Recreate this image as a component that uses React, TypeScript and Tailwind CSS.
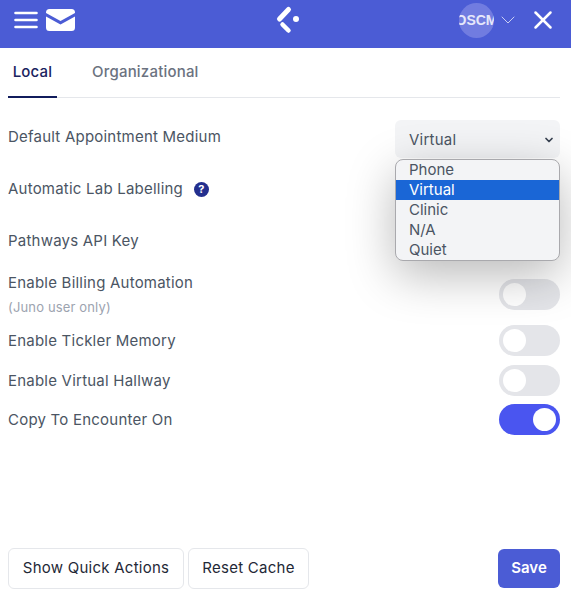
import { ChevronDown, X } from "lucide-react";

const inter = "font-['Inter',sans-serif]";

function Toggle({ on = false }: { on?: boolean }) {
  return (
    <span
      className={`flex h-[31px] w-[61px] shrink-0 items-center rounded-full px-[4px] ${
        on ? "justify-end bg-[#4a55f0]" : "justify-start bg-[#e4e5e9]"
      }`}
    >
      <span className="h-[23px] w-[23px] rounded-full bg-white" />
    </span>
  );
}

function Row({ label, on, className }: { label: string; on?: boolean; className: string }) {
  return (
    <div className={`flex items-center justify-between ${className}`}>
      <span className="pt-[2px]">{label}</span>
      <Toggle on={on} />
    </div>
  );
}

export default function App() {
  const options = ["Phone", "Virtual", "Clinic", "N/A", "Quiet"];

  return (
    <div className={`flex h-[591px] w-[571px] flex-col overflow-hidden bg-white text-[15px] text-[#4b5563] ${inter}`}>
      {/* Header */}
      <header className="flex h-12 shrink-0 items-center justify-between bg-[#4b5cd5] pb-[8px] pl-[14px] pr-[13px]">
        <div className="flex items-center gap-[8px]">
          <svg width="24" height="20" viewBox="0 0 24 20" fill="none" stroke="white" strokeWidth="2.6" strokeLinecap="round">
            <path d="M1.5 3h21M1.5 10h21M1.5 17h21" />
          </svg>
          <svg width="29" height="22" viewBox="0 0 29 22" fill="white">
            <path d="M3.5 0h22A3.5 3.5 0 0 1 29 3.5v.6l-14.5 8L0 4.100v-.6A3.500 3.500 0 0 1 3.500 0Z" />
            <path d="M0 7.500l14.500 8 14.500-8v11A3.500 3.500 0 0 1 25.500 22h-22A3.500 3.500 0 0 1 0 18.500Z" />
          </svg>
        </div>

        {/* Logo */}
        <svg className="ml-[41px]" width="26" height="30" viewBox="0 0 26 30" fill="white" stroke="white" strokeLinecap="round">
          <path d="M4.500 14 13.500 4.500" fill="none" strokeWidth="5" />
          <path d="M7.500 19.500 13.500 25.500" fill="none" strokeWidth="4.500" />
          <circle cx="21" cy="14" r="3" stroke="none" />
        </svg>

        <div className="flex items-center">
          <div className="flex h-[35px] w-[35px] items-center justify-center overflow-hidden rounded-full bg-[#717ce0]">
            <span className="text-[14px] font-bold text-[#e6e8fa] font-['Liberation_Sans',sans-serif]">OSCM</span>
          </div>
          <ChevronDown className="ml-[2px] text-[#c9cef3]" size={24} strokeWidth={1} />
          <X className="ml-[8px] text-white" size={30} strokeWidth={2} />
        </div>
      </header>

      {/* Tabs */}
      <nav className="ml-2 mr-[11px] flex h-[50px] shrink-0 border-b border-[#e5e7eb] tracking-[0.2px]">
        <span className="-mb-px flex w-[49px] items-center justify-center border-b-2 border-[#111c5c] font-medium text-[#1a2360]">
          Local
        </span>
        <span className="ml-[35px] flex items-center font-medium text-[#6b7280]">Organizational</span>
      </nav>

      {/* Settings */}
      <main className="relative ml-2 mr-[11px] flex-1 tracking-[0.22px]">
        <div className="flex h-[77px] items-start justify-between pt-[22px]">
          <span className="pt-[6px]">Default Appointment Medium</span>
          <span className="flex h-[38px] w-[165px] items-center justify-between rounded-md bg-[#f3f4f6] pl-[14px] pr-[5px] pt-[2px] text-[#4b5563]">
            Virtual
            <ChevronDown className="text-[#374151]" size={12} strokeWidth={3.500} />
          </span>
        </div>
        <div className="flex h-[52px] items-center pb-[24px]">
          Automatic Lab Labelling
          <span className="ml-[11px] flex h-[15px] w-[15px] items-center justify-center rounded-full bg-[#232f8e] text-[11px] font-bold text-white">
            ?
          </span>
        </div>
        <div className="flex h-[42px] items-center pb-[14px]">Pathways API Key</div>

        <div className="flex items-start justify-between">
          <div className="pt-[4px]">
            <div className="leading-[20px]">Enable Billing Automation</div>
            <div className="mt-[5px] text-[13px] leading-[18px] tracking-[0.15px] text-[#9ca3af]">(Juno user only)</div>
          </div>
          <div className="pt-[10px]">
            <Toggle />
          </div>
        </div>

        <Row label="Enable Tickler Memory" className="mt-[9px]" />
        <Row label="Enable Virtual Hallway" className="mt-[9px]" />
        <Row label="Copy To Encounter On" on className="mt-[8px]" />

        {/* Open select list */}
        <ul className="absolute right-0 top-[61px] w-[165px] overflow-hidden rounded-[8px] border border-[#a9a9ad] bg-[#f3f4f6] tracking-normal text-[#4b5563] shadow-[0_14px_48px_rgba(0,0,0,0.28)]">
          {options.map((option) => (
            <li
              key={option}
              className={`flex h-5 items-center pl-[13px] ${option === "Virtual" ? "bg-[#1a66d6] text-white" : ""}`}
            >
              {option}
            </li>
          ))}
        </ul>
      </main>

      {/* Footer */}
      <footer className="mb-[2px] ml-2 mr-[11px] flex shrink-0 items-center text-[#1f2937]">
        <button className="h-[41px] w-[176px] rounded-md border border-[#e5e7eb] tracking-[0.25px]">Show Quick Actions</button>
        <button className="ml-1 h-[41px] w-[121px] rounded-md border border-[#e5e7eb] tracking-[0.25px]">Reset Cache</button>
        <button className="ml-auto h-[39px] w-[62px] rounded-md bg-[#4b5cd5] font-semibold text-white">Save</button>
      </footer>
    </div>
  );
}
